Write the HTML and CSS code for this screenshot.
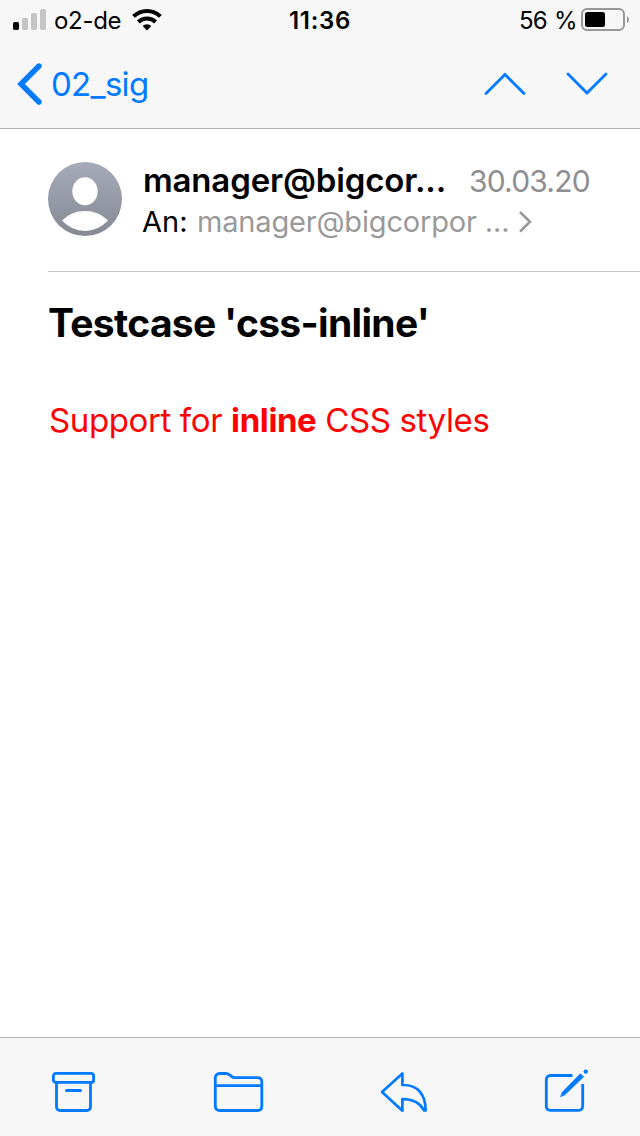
FILE: index.html
```html
<!DOCTYPE html>
<html lang="de">
<head>
<meta charset="utf-8">
<title>Mail</title>
<link rel="stylesheet" href="styles.css">
</head>
<body>
<header class="top">
  <div class="status">
    <div class="status-left">
      <svg class="signal" width="34" height="22" viewBox="0 0 34 22"><rect x="0" y="13" width="6" height="8" rx="1.8" fill="#000"/><g fill="#c5c5c5"><rect x="9" y="9" width="6" height="12" rx="1.8"/><rect x="18" y="4" width="6" height="17" rx="1.8"/><rect x="27" y="0" width="6" height="21" rx="1.8"/></g></svg>
      <span class="carrier">o2-de</span>
      <svg class="wifi" width="30" height="22" viewBox="0 0 30 22"><g fill="none" stroke="#000" stroke-width="4"><path d="M1.600 7.400a19.200 19.200 0 0 1 26.800 0"/><path d="M6.400 13a12.200 12.200 0 0 1 17.200 0"/></g><path d="M10.700 17.100a6.200 6.200 0 0 1 8.600 0L15 21.500Z"/></svg>
    </div>
    <span class="clock">11:36</span>
    <div class="status-right">
      <span class="percent">56 %</span>
      <svg class="battery" width="49" height="24" viewBox="0 0 49 24"><rect x="1" y="1" width="42" height="21" rx="5" fill="none" stroke="#989898" stroke-width="2"/><rect x="4" y="4" width="20" height="15" rx="2.5"/><path d="M46 8q2 1 2 3.500t-2 3.500Z" fill="#989898"/></svg>
    </div>
  </div>
  <nav class="nav">
    <a class="back"><svg width="26" height="44" viewBox="0 0 26 44"><path d="M22 4 4 22l18 18" fill="none" stroke="#007aff" stroke-width="5.400" stroke-linecap="round"/></svg><span class="back-label">02_sig</span></a>
    <div class="arrows">
      <svg width="42" height="24" viewBox="0 0 42 24"><path d="M2 21.500 21 2.500l19 19" fill="none" stroke="#007aff" stroke-width="2.800" stroke-linecap="round"/></svg>
      <svg width="42" height="24" viewBox="0 0 42 24"><path d="M2 2 21 21 40 2" fill="none" stroke="#007aff" stroke-width="2.800" stroke-linecap="round"/></svg>
    </div>
  </nav>
</header>
<main class="mail">
  <section class="sender">
    <svg class="avatar" width="74" height="74" viewBox="0 0 74 74"><defs><linearGradient id="g" x2="0" y2="1"><stop stop-color="#a5abb9"/><stop offset="1" stop-color="#858993"/></linearGradient></defs><circle cx="37" cy="37" r="37" fill="url(#g)"/><ellipse cx="37" cy="29.300" rx="12.700" ry="14" fill="#fff"/><path d="M14 58.500Q23 49 37 49t23 9.500Q50 69 37 69T14 58.500Z" fill="#fff"/></svg>
    <div class="meta">
      <div class="from"><span class="name">manager@bigcor...</span><span class="date">30.03.20</span></div>
      <div class="to"><span class="to-label">An:</span><span class="address">manager@bigcorpor ...</span><svg width="14" height="24" viewBox="0 0 14 24"><path d="m2 2 10 9.800L2 21.600" fill="none" stroke="#999" stroke-width="2.600"/></svg></div>
    </div>
  </section>
  <article class="body">
    <h1 class="title">Testcase 'css-inline'</h1>
    <p class="text">Support for <b>inline</b> CSS styles</p>
  </article>
</main>
<footer class="toolbar">
  <svg width="44" height="42" viewBox="0 0 44 42"><g fill="none" stroke="#007aff" stroke-width="2.800"><rect x="1.400" y="1.400" width="40.200" height="9" rx="2.500"/><path d="M4.500 10.500v24q0 4 4 4H34.500q4 0 4-4v-24"/><path d="M14.500 18.500h14" stroke-width="3" stroke-linecap="round"/></g></svg>
  <svg width="50" height="42" viewBox="0 0 50 42"><path d="M2.300 6q0-4.500 4.500-4.500h6q2 0 3.500 1.200l2.500 1.900q1.200 1.100 3 1.100H44.500q4.300 0 4.300 4.200V34q0 4.500-4.500 4.500H6.800Q2.300 38.500 2.300 34ZM2.300 13.700h46.500" fill="none" stroke="#007aff" stroke-width="2.800"/></svg>
  <svg width="48" height="42" viewBox="0 0 48 42"><path d="M23.400 1.500v11.500C38.500 12.500 46.500 22 46.700 38.500h-1.500C40.500 30 33.500 27 23.400 27v11.700L3 20Z" fill="none" stroke="#007aff" stroke-width="2.700" stroke-linejoin="round"/></svg>
  <svg width="44" height="44" viewBox="0 0 44 44"><path d="M28.500 6.500H6.500Q2.300 6.500 2.300 11v26q0 4.300 4.200 4.300h28q4.200 0 4.200-4.300V15" fill="none" stroke="#007aff" stroke-width="2.800"/><path d="M36.300 4.700 39.700 7.800 21 25.800 16.500 27.800 18.200 23.300Z" fill="#007aff" stroke="#007aff" stroke-width=".6"/><circle cx="41.800" cy="2.600" r="2.200" fill="#007aff"/></svg>
</footer>
</body>
</html>
```
FILE: styles.css
```css
body { margin: 0; height: 1136px; display: flex; flex-direction: column; background: #fff; color: #000; font-family: Inter, "Liberation Sans", sans-serif; overflow: hidden; }
svg { display: block; flex: none; overflow: visible; }
span { white-space: nowrap; }
.top { height: 128px; background: #f7f7f7; border-bottom: 1px solid #b2b2b2; }
.status { height: 40px; display: grid; grid-template-columns: 1fr auto 1fr; align-items: center; font-size: 24px; line-height: 38px; }
.status span { padding-top: 2px; }
.status-left { display: flex; align-items: center; padding-left: 13px; }
.carrier { margin-left: 7px; width: 70px; letter-spacing: -0.3px; }
.wifi { margin-left: 8px; }
.clock { font-weight: 600; letter-spacing: 0.7px; }
.status-right { display: flex; align-items: center; justify-content: flex-end; padding-right: 10px; }
.percent { width: 62px; letter-spacing: -0.9px; word-spacing: 1.5px; }
.nav { height: 88px; display: flex; align-items: center; justify-content: space-between; padding: 0 32px 0 17px; }
.back { display: flex; align-items: center; color: #007aff; font-size: 33px; line-height: 88px; }
.back-label { margin-left: 8px; letter-spacing: -0.7px; }
.arrows { display: flex; gap: 40px; }
.mail { flex: 1; padding-left: 48px; }
.sender { height: 143px; box-sizing: border-box; border-bottom: 1px solid #c6c6c8; display: flex; align-items: flex-start; padding-top: 33px; }
.avatar { margin-right: 20px; }
.meta { flex: 1; }
.from { display: flex; height: 38px; line-height: 36px; align-items: baseline; }
.name { font-size: 33px; font-weight: 600; width: 326px; padding-left: 1px; letter-spacing: -0.16px; }
.date { font-size: 30px; color: #8e8e93; letter-spacing: -0.8px; }
.to { display: flex; align-items: center; height: 44px; font-size: 29px; line-height: 44px; }
.to-label { width: 55px; }
.address { color: #999; width: 321px; letter-spacing: -0.17px; }
.title { margin: 31px 0 0; font-size: 39px; line-height: 40px; font-weight: 700; white-space: nowrap; letter-spacing: -0.68px; }
.text { margin: 57px 0 0 1px; font-size: 33px; line-height: 40px; color: #f00; white-space: nowrap; letter-spacing: -0.38px; }
.text b { font-weight: 700; }
.toolbar { height: 98px; border-top: 1px solid #b2b2b2; background: #f7f7f7; display: flex; justify-content: space-between; padding: 0 52px; align-items: flex-start; }
.toolbar svg { margin-top: 34px; }
.toolbar svg:last-child { margin-top: 31px; }
```
